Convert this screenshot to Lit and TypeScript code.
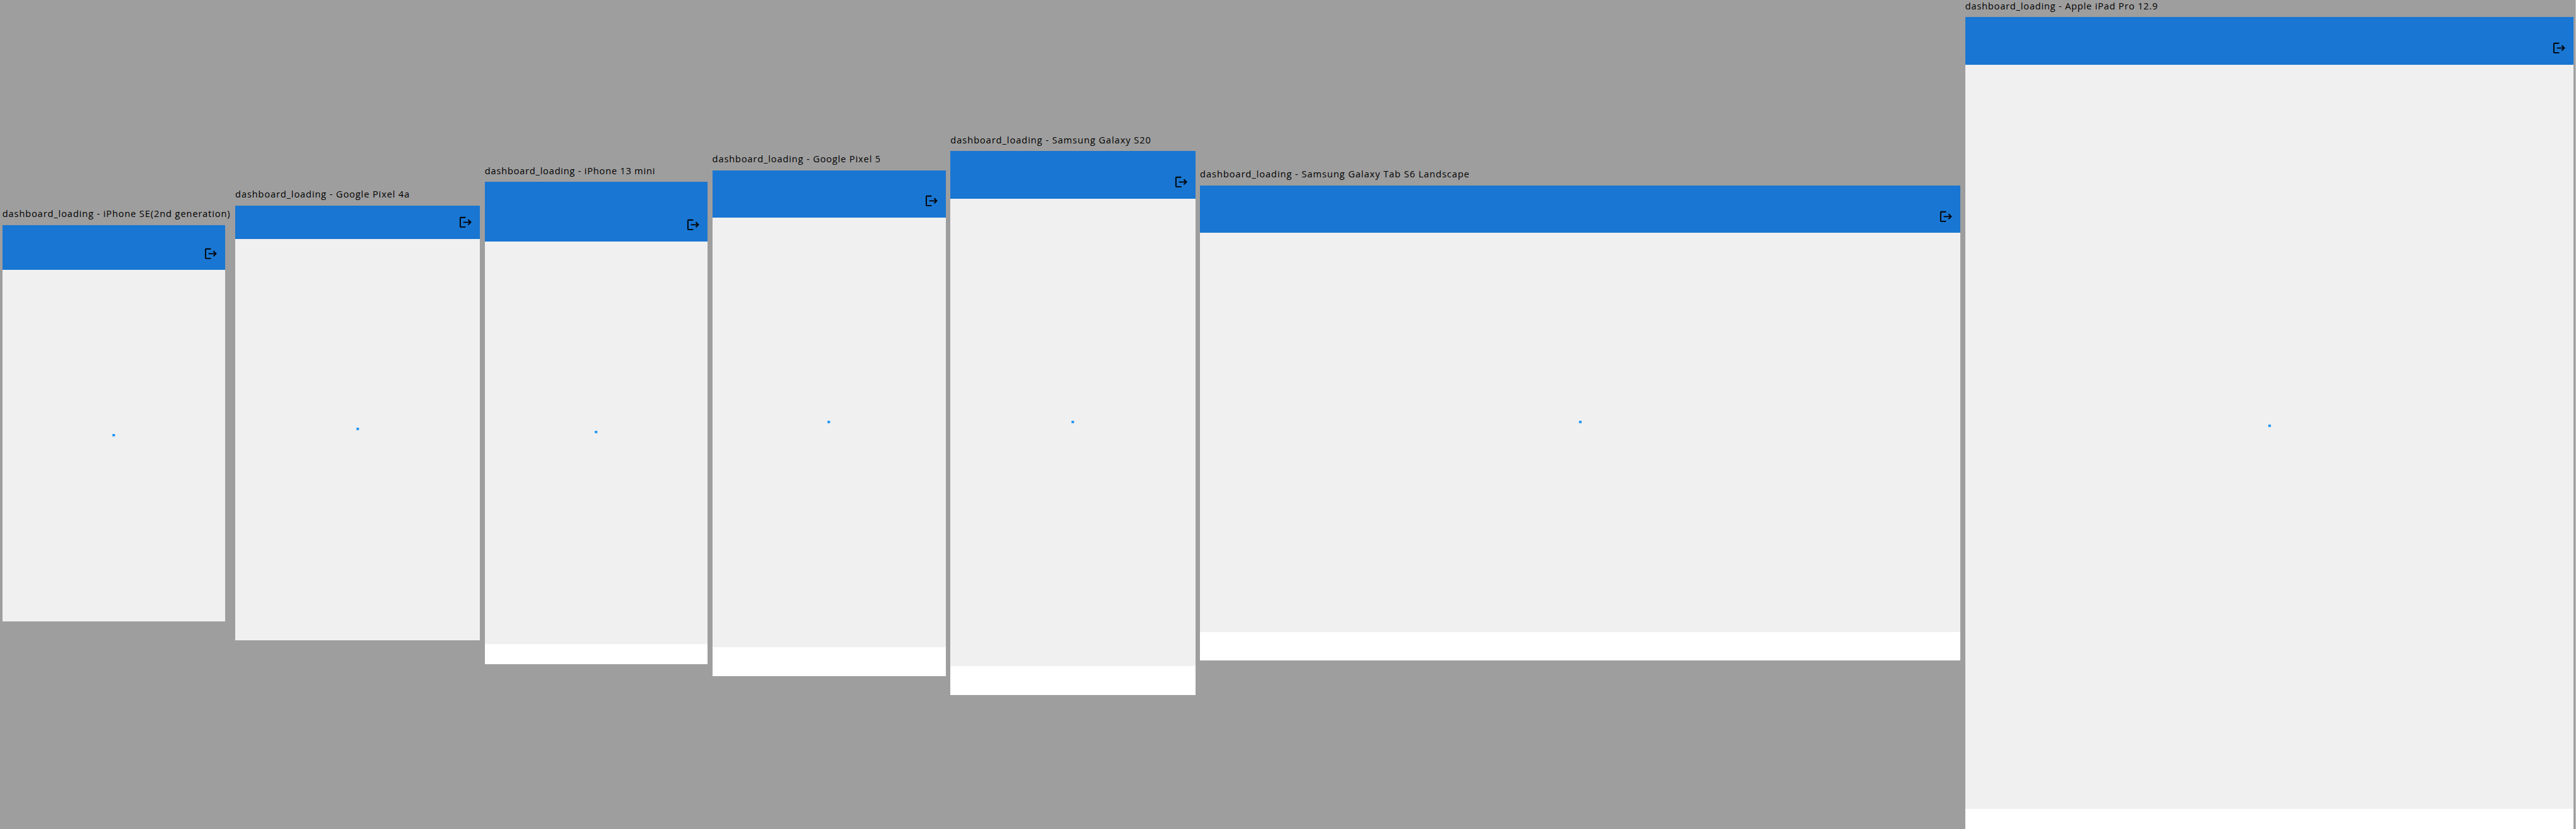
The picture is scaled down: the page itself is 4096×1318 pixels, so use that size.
import { LitElement, html, css, svg } from "lit";
import { customElement, property } from "lit/decorators.js";
import { styleMap } from "lit/directives/style-map.js";

interface Device {
  name: string;
  width: number;
  height: number;
  bar: number;
  inset: number;
  label: number;
  column?: number;
}

const SCALE = 4096 / 4336;

const DEVICES: Device[] = [
  { name: "iPhone SE(2nd generation)", width: 375, height: 667, bar: 76, inset: 0, label: 384, column: 384 },
  { name: "Google Pixel 4a", width: 412, height: 732, bar: 56, inset: 0, label: 294 },
  { name: "iPhone 13 mini", width: 375, height: 812, bar: 100, inset: 34, label: 287 },
  { name: "Google Pixel 5", width: 393, height: 851, bar: 80, inset: 48, label: 284 },
  { name: "Samsung Galaxy S20", width: 412, height: 915, bar: 80, inset: 48, label: 338 },
  { name: "Samsung Galaxy Tab S6 Landscape", width: 1280, height: 800, bar: 80, inset: 48, label: 454 },
  { name: "Apple iPad Pro 12.9", width: 1024, height: 1366, bar: 80, inset: 34, label: 324.5 },
];

const logoutIcon = svg`<path d="M17 7l-1.41 1.41L18.17 11H8v2h10.17l-2.58 2.58L17 17l5-5zM4 5h8V3H4c-1.1 0-2 .9-2 2v14c0 1.1.9 2 2 2h8v-2H4z"/>`;

const px = (v: number) => `${v * SCALE}px`;

@customElement("device-preview")
class DevicePreview extends LitElement {
  @property({ attribute: false }) device!: Device;

  static styles = css`
    :host {
      display: block;
      flex: none;
      --s: 0.94465;
    }
    .label {
      display: flex;
      height: calc(29px * var(--s));
      box-sizing: border-box;
      font: 500 14.7px/18px "Open Sans", "Noto Sans", sans-serif;
      color: #000;
      white-space: pre;
    }
    .text {
      flex: none;
    }
    .screen {
      display: flex;
      flex-direction: column;
      background: #fff;
    }
    .bar {
      display: flex;
      flex: none;
      justify-content: flex-end;
      align-items: flex-end;
      box-sizing: border-box;
      padding: 0 calc(12px * var(--s)) calc(16px * var(--s)) 0;
      background: #1976d2;
    }
    .icon {
      display: block;
      width: calc(24px * var(--s));
      height: calc(24px * var(--s));
      fill: #000;
    }
    .body {
      flex: 1;
      display: flex;
      align-items: center;
      justify-content: center;
      background: #f0f0f0;
    }
    .progress {
      width: calc(40px * var(--s));
      height: calc(40px * var(--s));
      display: block;
      fill: #2196f3;
    }
  `;

  firstUpdated() {
    this.fitLabel();
    document.fonts?.ready.then(() => this.fitLabel());
  }

  /* Spreads the letters so that the title takes its nominal width. */
  private fitLabel() {
    const el = this.renderRoot.querySelector<HTMLElement>(".text");
    if (!el) return;
    el.style.letterSpacing = "0px";
    const natural = el.getBoundingClientRect().width;
    const count = (el.textContent ?? "").length;
    el.style.letterSpacing = `${(this.device.label * SCALE - natural) / count}px`;
  }

  render() {
    const d = this.device;
    return html`
      <div style=${styleMap({ width: px(d.column ?? d.width) })}>
        <div class="label"><span class="text">dashboard_loading - ${d.name}</span></div>
        <div class="screen" style=${styleMap({ width: px(d.width), height: px(d.height) })}>
          <div class="bar" style=${styleMap({ height: px(d.bar) })}>
            <svg class="icon" viewBox="0 0 24 24">${logoutIcon}</svg>
          </div>
          <div class="body">
            <svg class="progress" viewBox="0 0 40 40"><rect x="17.7" y="0" width="4.4" height="4" /></svg>
          </div>
          <div style=${styleMap({ height: px(d.inset) })}></div>
        </div>
      </div>
    `;
  }
}

@customElement("app-root")
class AppRoot extends LitElement {
  static styles = css`
    :host {
      display: block;
      width: 4096px;
      height: 1318px;
      box-sizing: border-box;
      border-right: 1px solid #c6c6c6;
      overflow: hidden;
      background: #9e9e9e;
    }
    .board {
      display: flex;
      align-items: center;
      gap: 7.557px;
      height: 1317.8px;
      padding-left: 3.779px;
      box-sizing: border-box;
    }
  `;

  render() {
    return html`<div class="board">
      ${DEVICES.map((d) => html`<device-preview .device=${d}></device-preview>`)}
    </div>`;
  }
}
